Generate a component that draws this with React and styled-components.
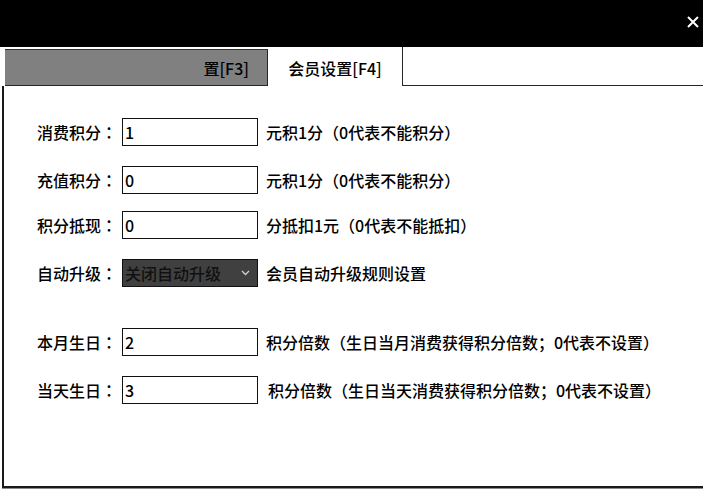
import React from 'react'
import styled, { createGlobalStyle } from 'styled-components'

const Global = createGlobalStyle`
    html, body {
        margin: 0;
        padding: 0;
        background: #fff;
    }
    body {
        font-family: "Noto Sans CJK SC", "Microsoft YaHei", sans-serif;
        font-size: 16px;
        font-weight: 500;
        color: #000;
    }
`

const Janela = styled.div`
    width: 703px;
    height: 503px;
    display: flex;
    flex-direction: column;
    background: #fff;
    overflow: hidden;
`

const Cabecalho = styled.div`
    height: 47px;
    background: #000;
    display: flex;
    justify-content: flex-end;
    align-items: flex-start;
    padding: 16px 4px 0 0;
    box-sizing: border-box;
`

const BotaoFechar = styled.button`
    width: 12px;
    height: 12px;
    padding: 0;
    border: none;
    background: transparent;
    display: flex;
    cursor: pointer;
`

const BarraAbas = styled.div`
    display: flex;
    height: 39px;
    padding-left: 5px;
`

const Aba = styled.div`
    box-sizing: border-box;
    width: ${p => p.$largura}px;
    display: flex;
    align-items: center;
    line-height: 20px;
    white-space: nowrap;
    overflow: hidden;
    border-right: 1px solid #262626;
    background: ${p => (p.$ativa ? '#fff' : '#808080')};
    border-top: ${p => (p.$ativa ? 'none' : '1px solid #333')};
    border-bottom: ${p => (p.$ativa ? 'none' : '1px solid #262626')};
    margin-top: ${p => (p.$ativa ? '0' : '2px')};
    justify-content: ${p => (p.$ativa ? 'center' : 'flex-end')};
    padding-right: ${p => (p.$ativa ? '0' : '18px')};
    padding-top: ${p => (p.$ativa ? '2px' : '0')};
`

const RestoAbas = styled.div`
    flex: 1;
    border-bottom: 1px solid #262626;
`

const Painel = styled.div`
    height: 402px;
    margin-left: 2px;
    box-sizing: border-box;
    border-left: 2px solid #1a1a1a;
    border-bottom: 2px solid #1a1a1a;
    box-shadow: 0 1px 0 #8a8a8a;
    display: flex;
    flex-direction: column;
    padding: 32px 0 0 33px;
`

const Linha = styled.div`
    display: flex;
    align-items: center;
    height: 28px;
    margin-top: ${p => p.$topo || 0}px;
`

const Rotulo = styled.label`
    width: 85px;
    line-height: 20px;
    white-space: nowrap;
`

// dois-pontos centrado, como no original
const DoisPontos = styled.span`
    font-family: "Noto Sans CJK TC", "Noto Sans CJK SC", sans-serif;
`

const Campo = styled.input`
    box-sizing: border-box;
    width: 136px;
    height: 28px;
    border: 1px solid #111;
    padding: 0 2px;
    font-family: inherit;
    font-size: 16px;
    font-weight: 500;
    color: #000;
    background: #fff;
    outline: none;
`

const Selecao = styled.div`
    box-sizing: border-box;
    width: 136px;
    height: 28px;
    border: 1px solid #111;
    background-color: #404040;
    display: flex;
    align-items: center;
    justify-content: space-between;
    padding: 0 7px 0 2px;
    line-height: 20px;
    white-space: nowrap;
    cursor: default;
`

const TextoSelecao = styled.span`
    color: #111;
`

const Dica = styled.span`
    margin-left: ${p => 8 + (p.$desvio || 0)}px;
    line-height: 20px;
    white-space: nowrap;
`

const campos = [
    { rotulo: '消费积分', valor: '1', dica: '元积1分（0代表不能积分）', topo: 0 },
    { rotulo: '充值积分', valor: '0', dica: '元积1分（0代表不能积分）', topo: 20 },
    { rotulo: '积分抵现', valor: '0', dica: '分抵扣1元（0代表不能抵扣）', topo: 17 },
]

const aniversarios = [
    { rotulo: '本月生日', valor: '2', dica: '积分倍数（生日当月消费获得积分倍数；0代表不设置）', topo: 41 },
    { rotulo: '当天生日', valor: '3', dica: '积分倍数（生日当天消费获得积分倍数；0代表不设置）', topo: 20, desvio: 2 },
]

class App extends React.Component {
    renderCampo = (item) => (
        <Linha key={item.rotulo} $topo={item.topo}>
            <Rotulo>{item.rotulo}<DoisPontos>：</DoisPontos></Rotulo>
            <Campo type="text" defaultValue={item.valor} />
            <Dica $desvio={item.desvio}>{item.dica}</Dica>
        </Linha>
    )

    render() {
        return (
            <Janela>
                <Global />
                <Cabecalho>
                    <BotaoFechar aria-label="关闭">
                        <svg width="12" height="12" viewBox="0 0 12 12">
                            <path d="M1 1 L11 11 M11 1 L1 11" stroke="#fff" strokeWidth="2" />
                        </svg>
                    </BotaoFechar>
                </Cabecalho>
                <BarraAbas>
                    <Aba $largura={263}>置[F3]</Aba>
                    <Aba $ativa $largura={135}>会员设置[F4]</Aba>
                    <RestoAbas />
                </BarraAbas>
                <Painel>
                    {campos.map(this.renderCampo)}
                    <Linha $topo={20}>
                        <Rotulo>自动升级<DoisPontos>：</DoisPontos></Rotulo>
                        <Selecao role="combobox">
                            <TextoSelecao>关闭自动升级</TextoSelecao>
                            <svg width="9" height="6" viewBox="0 0 9 6">
                                <path d="M1 1 L4.5 4.5 L8 1" fill="none" stroke="#d0d0d0" strokeWidth="1.3" />
                            </svg>
                        </Selecao>
                        <Dica>会员自动升级规则设置</Dica>
                    </Linha>
                    {aniversarios.map(this.renderCampo)}
                </Painel>
            </Janela>
        )
    }
}

export default App
